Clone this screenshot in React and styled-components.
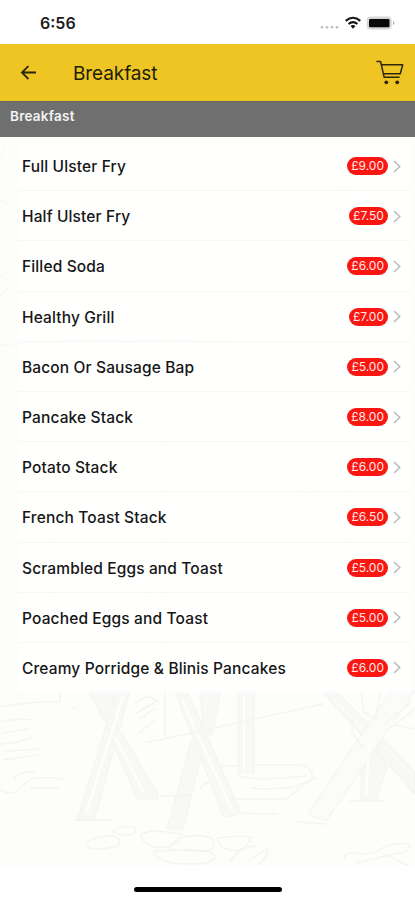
import React from "react";
import styled, { createGlobalStyle } from "styled-components";

const GlobalStyle = createGlobalStyle`
  * {
    box-sizing: border-box;
  }
  body {
    margin: 0;
    background-color: #ffffff;
    font-family: Inter, "Liberation Sans", sans-serif;
  }
`;

const Screen = styled.div`
  display: flex;
  flex-direction: column;
  width: 415px;
  height: 900px;
  overflow: hidden;
  background-color: #ffffff;
`;

const StatusBar = styled.div`
  display: flex;
  justify-content: space-between;
  height: 44px;
  padding: 14px 20px 0 40px;
`;

const Time = styled.span`
  font-size: 16px;
  line-height: 19px;
  font-weight: 600;
  color: #1c1c1c;
`;

const StatusIcons = styled.svg`
  width: 76px;
  height: 18px;
`;

const Header = styled.header`
  display: flex;
  align-items: center;
  height: 57px;
  padding: 0 11px 0 20px;
  background-color: #efc524;
`;

const BackButton = styled.button`
  display: flex;
  width: 53px;
  padding: 0;
  border: none;
  background-color: inherit;
`;

const CartButton = styled(BackButton)`
  width: 28px;
  margin-left: auto;
`;

const Title = styled.h1`
  margin: 0;
  padding-top: 2px;
  font-size: 19px;
  line-height: 24px;
  font-weight: 400;
  letter-spacing: -0.1px;
  color: #221d08;
`;

const Content = styled.main`
  display: grid;
  grid-template-columns: 415px;
  grid-template-rows: 765px;
  background-color: #fdfdfb;
`;

const Sketch = styled.svg`
  grid-area: 1 / 1;
  width: 415px;
  height: 765px;
`;

const Menu = styled.section`
  grid-area: 1 / 1;
  z-index: 1;
`;

const SectionTitle = styled.h2`
  height: 36px;
  margin: 0 0 4px;
  padding: 6px 10px 0;
  border-top: 1px solid #66655f;
  background-color: #6f6f6f;
  font-size: 13.5px;
  line-height: 17px;
  font-weight: 600;
  letter-spacing: 0.25px;
  color: #f4f4f4;
`;

const List = styled.ul`
  margin: 0;
  padding: 0 4px 0 18px;
  list-style: none;
`;

const Row = styled.li`
  display: flex;
  align-items: center;
  height: 50.2px;
  padding: 1px 10px 0 4px;
  border-bottom: 1px solid ${props => (props.$last ? "transparent" : "#f7f7f6")};
  background-color: rgba(255, 255, 255, 0.75);
`;

const Name = styled.span`
  flex: 1;
  padding-top: 2px;
  font-size: 15.5px;
  line-height: 20px;
  font-weight: 500;
  letter-spacing: 0.14px;
  white-space: nowrap;
  color: #161616;
`;

const Price = styled.span`
  min-width: 39px;
  height: 18px;
  margin-right: 5px;
  padding: 0 4px;
  border-radius: 9px;
  background-color: #fb1711;
  font-size: 12px;
  line-height: 18px;
  text-align: center;
  color: #ffe9e6;
`;

const HomeArea = styled.footer`
  display: flex;
  flex: 1;
  justify-content: center;
  padding-top: 21px;
`;

const HomeIndicator = styled.div`
  width: 148px;
  height: 5px;
  border-radius: 3px;
  background-color: #000000;
`;

const items = [
  { name: "Full Ulster Fry", price: "£9.00" },
  { name: "Half Ulster Fry", price: "£7.50" },
  { name: "Filled Soda", price: "£6.00" },
  { name: "Healthy Grill", price: "£7.00" },
  { name: "Bacon Or Sausage Bap", price: "£5.00" },
  { name: "Pancake Stack", price: "£8.00" },
  { name: "Potato Stack", price: "£6.00" },
  { name: "French Toast Stack", price: "£6.50" },
  { name: "Scrambled Eggs and Toast", price: "£5.00" },
  { name: "Poached Eggs and Toast", price: "£5.00" },
  { name: "Creamy Porridge & Blinis Pancakes", price: "£6.00" }
];

const Status = () => (
  <StatusIcons viewBox="319 14 76 18">
    <g fill="#bdbdbd">
      <circle cx="322" cy="27.3" r="1.3" />
      <circle cx="327" cy="27.3" r="1.3" />
      <circle cx="332" cy="27.3" r="1.3" />
      <circle cx="337" cy="27.3" r="1.3" />
    </g>
    <g fill="none" stroke="#151515" strokeWidth="2.1">
      <path d="M345.7 20.9 Q353 14.6 360.3 20.9" />
      <path d="M348.6 24 Q353 20.2 357.4 24" />
    </g>
    <path d="M350.5 26 Q353 24 355.5 26 L353 28.8 Z" fill="#151515" />
    <rect x="366.7" y="16.5" width="25" height="13" rx="4" fill="#d6d6d6" />
    <rect x="369" y="19" width="20.5" height="8.3" rx="1.4" fill="#090909" />
    <path d="M393 20.7 Q396 23 393 25.3 Z" fill="#b5b5b5" />
  </StatusIcons>
);

const BackArrow = () => (
  <svg width="17" height="16" viewBox="0 0 17 16">
    <path
      d="M16 7.5H2M8.4 1.2L1.9 7.5L8.4 14"
      fill="none"
      stroke="#2d270b"
      strokeWidth="1.8"
    />
  </svg>
);

const Cart = () => (
  <svg width="28" height="26" viewBox="0 0 28 26">
    <g fill="none" stroke="#2d270b" strokeWidth="1.5" strokeLinejoin="round">
      <path d="M0.4 1.5H4.6L8.2 17.3H23.6" />
      <path d="M5.5 4.8H26.7L24.3 13.8H7.4" />
    </g>
    <circle cx="10.3" cy="22.3" r="1.9" fill="#2d270b" />
    <circle cx="21.2" cy="22.3" r="1.9" fill="#2d270b" />
  </svg>
);

const Chevron = () => (
  <svg width="8" height="13" viewBox="0 0 8 13">
    <path d="M1 1L6.7 6.5L1 12" fill="none" stroke="#bfbfbf" strokeWidth="1.7" />
  </svg>
);

// pencil drawing of cafe tables and cobbles that shows faintly behind the menu
const CafeSketch = () => (
  <Sketch viewBox="0 101 415 765">
    <g fill="#f8f8f6" stroke="#f4f4f2" strokeWidth="1.2" strokeLinejoin="round">
      <path d="M89 691H129L113 722H105Z" />
      <path d="M117 691H130L94 820H77Z" />
      <path d="M108 731L121 732L158 795V799H137Z" />
      <path d="M200 691H221L212 735H204Z" />
      <path d="M191 742L205 740L183 829H167Z" />
      <path d="M175 691L188 693L241 813L224 818Z" />
      <path d="M238 691H254V773H238Z" />
      <path d="M322 691H336L415 772V794L386 762Z" />
      <path d="M362 754L371 740L387 767L376 800H361Z" />
      <path d="M391 691H415L326 821L308 814Z" fill="#fbfbf9" />
    </g>
    <g fill="none" stroke="#fefefd" strokeWidth="2.4">
      <path d="M123 696L86 814" />
      <path d="M115 737L144 793" />
      <path d="M182 700L232 810" />
      <path d="M244 695V770" />
      <path d="M369 745L366 796" />
    </g>
    <g
      fill="none"
      stroke="#f4f4f2"
      strokeWidth="1.5"
      strokeLinecap="round"
      strokeLinejoin="round"
    >
      <path d="M0 707Q35 701 60 702V691M72 707Q76 711 78 706" />
      <path d="M0 722Q18 718 31 720M2 733L29 729M0 744Q20 743 32 737M7 751L39 749M3 760L38 755" />
      <path d="M165 691V739L147 742M164 739L323 704" />
      <path d="M136 704Q149 690 160 704M138 720L155 708M139 733L154 721M137 713L158 700" />
      <path d="M219 766H238M254 765H302Q314 768 312 779L298 789L287 799H232M202 790Q198 785 208 783" />
      <path d="M238 775Q252 782 306 776M252 788Q280 790 296 786L316 778" />
      <path d="M160 796L192 795M238 813L277 814M75 820L111 820M297 822L326 824M350 801L384 801" />
      <path d="M352 718V733L362 746M391 724L415 729" />
      <path d="M361 691L364 712L375 719L381 691M386 723L410 703M386 731L415 709" />
      <path d="M0 790Q10 796 19 790Q26 782 32 779Q48 776 62 779M14 779Q20 770 34 772M30 788L58 788" />
      <path d="M86 844Q90 837 113 836Q123 839 118 845Q108 850 92 849Q85 847 86 844Z" />
      <path d="M113 832Q119 825 134 827Q139 831 131 835Q119 836 113 832Z" />
      <path d="M141 835Q148 829 166 832L182 834L169 847Q144 850 141 835Z" />
      <path d="M171 846L184 837Q200 833 213 839Q217 852 202 851L169 850Z" />
      <path d="M153 851L190 850Q212 850 216 857Q211 865 190 864Q157 864 153 851Z" />
      <path d="M217 838Q239 835 251 837Q250 844 240 850Q222 853 217 838Z" />
      <path d="M230 861Q241 846 255 846M247 861L267 849Q271 853 259 865" />
      <path d="M344 859Q345 851 357 853Q369 856 378 850Q395 841 409 844Q411 852 398 853L357 863M387 855L407 865" />
    </g>
    <g fill="none" stroke="#ffffff" strokeWidth="2" strokeDasharray="3 3">
      <path d="M333 700L361 727" />
      <path d="M386 732L414 762" />
      <path d="M391 722L412 748" />
    </g>
    <g fill="none" stroke="#f7f7f5" strokeWidth="1.2">
      <path d="M0 155L5 149M0 200L7 204M0 275L7 281M0 296L8 288M166 391V691M55 540V640M302 490L340 510M410 215V640" />
      <path d="M300 215L343 190L380 205M0 345Q120 335 230 343M290 450H415M150 545V632M350 470V540" />
    </g>
  </Sketch>
);

const MenuRow = ({ name, price, last }) => (
  <Row $last={last}>
    <Name>{name}</Name>
    <Price>{price}</Price>
    <Chevron />
  </Row>
);

const App = () => (
  <>
    <GlobalStyle />
    <Screen>
      <StatusBar>
        <Time>6:56</Time>
        <Status />
      </StatusBar>
      <Header>
        <BackButton aria-label="Back">
          <BackArrow />
        </BackButton>
        <Title>Breakfast</Title>
        <CartButton aria-label="Cart">
          <Cart />
        </CartButton>
      </Header>
      <Content>
        <CafeSketch />
        <Menu>
          <SectionTitle>Breakfast</SectionTitle>
          <List>
            {items.map((item, index) => (
              <MenuRow
                key={item.name}
                {...item}
                last={index === items.length - 1}
              />
            ))}
          </List>
        </Menu>
      </Content>
      <HomeArea>
        <HomeIndicator />
      </HomeArea>
    </Screen>
  </>
);

export default App;
